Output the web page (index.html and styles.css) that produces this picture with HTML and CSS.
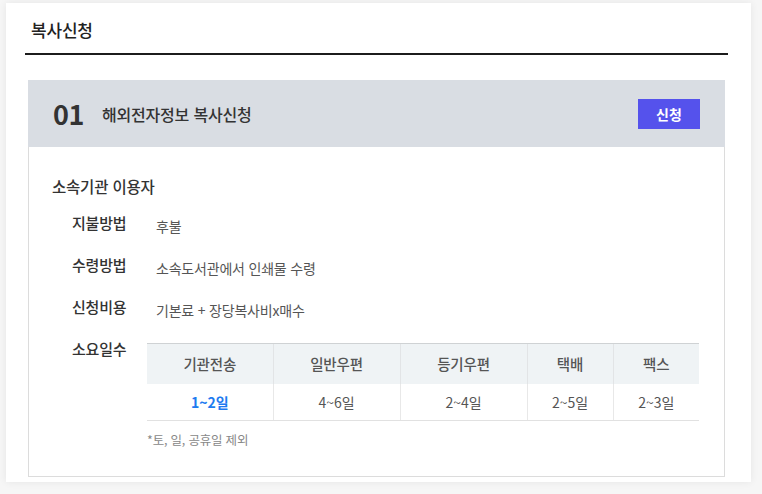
FILE: index.html
```html
<!DOCTYPE html>
<html lang="ko">
<head>
<meta charset="utf-8">
<title>복사신청</title>
<link rel="stylesheet" href="styles.css">
</head>
<body>
<div class="card">
  <h2 class="page-title">복사신청</h2>
  <section class="panel">
    <header class="panel-head">
      <span class="num">01</span>
      <span class="panel-title">해외전자정보 복사신청</span>
      <button class="btn">신청</button>
    </header>
    <div class="panel-body">
      <h3 class="group-title">소속기관 이용자</h3>
      <div class="rows">
        <div class="row"><span class="label">지불방법</span><span class="value">후불</span></div>
        <div class="row"><span class="label">수령방법</span><span class="value">소속도서관에서 인쇄물 수령</span></div>
        <div class="row"><span class="label">신청비용</span><span class="value">기본료 + 장당복사비x매수</span></div>
        <div class="row">
          <span class="label">소요일수</span>
          <div class="table-wrap">
            <table class="days">
              <colgroup>
                <col class="c1"><col class="c2"><col class="c3"><col class="c4"><col class="c5">
              </colgroup>
              <thead>
                <tr><th>기관전송</th><th>일반우편</th><th>등기우편</th><th>택배</th><th>팩스</th></tr>
              </thead>
              <tbody>
                <tr><td class="hl">1~2일</td><td>4~6일</td><td>2~4일</td><td>2~5일</td><td>2~3일</td></tr>
              </tbody>
            </table>
            <p class="note">*토, 일, 공휴일 제외</p>
          </div>
        </div>
      </div>
    </div>
  </section>
</div>
</body>
</html>
```
FILE: styles.css
```css
* { box-sizing: border-box; }
html, body { margin: 0; padding: 0; }
body {
  background: #f6f6f6;
  font-family: "Noto Sans CJK KR", "Noto Sans", sans-serif;
  color: #333;
  width: 762px;
  height: 494px;
  overflow: hidden;
}
.card {
  background: #fff;
  margin: 3px 11px 0 6px;
  padding: 15px 23px 5px 19px;
  box-shadow: 0 0 8px rgba(0,0,0,0.07);
}
.page-title {
  margin: 0;
  font-size: 17px;
  font-weight: 500;
  line-height: 24px;
  color: #222;
  padding: 0 0 11px 6px;
  border-bottom: 2px solid #1c1c1c;
  letter-spacing: -0.2px;
}
.panel {
  margin: 25px 3px 0 3px;
  border: 1px solid #dcdcdc;
  border-top: none;
}
.panel-head {
  display: flex;
  align-items: center;
  height: 67px;
  background: #d9dde3;
  margin: 0 -1px;
  padding: 0 25px 0 25px;
}
.num {
  font-size: 27px;
  font-weight: 700;
  color: #333;
  line-height: 1;
  width: 49px;
  letter-spacing: -0.5px;
}
.panel-title {
  font-size: 16px;
  font-weight: 500;
  color: #333;
  flex: 1;
  letter-spacing: -0.2px;
}
.btn {
  width: 62px;
  height: 30px;
  border: none;
  background: #5552ec;
  color: #fff;
  font-family: inherit;
  font-size: 14px;
  font-weight: 700;
  padding: 0;
  margin-top: 1px;
}
.panel-body {
  padding: 28px 25px 27px 23px;
}
.group-title {
  margin: 0;
  font-size: 15.5px;
  font-weight: 500;
  line-height: 22px;
  color: #333;
  letter-spacing: -0.2px;
}
.rows {
  display: flex;
  flex-direction: column;
  gap: 20px;
  margin-top: 15px;
  padding-left: 20px;
}
.row {
  display: flex;
  align-items: flex-start;
  line-height: 22px;
}
.label {
  width: 75px;
  flex: none;
  font-size: 15px;
  font-weight: 500;
  color: #333;
  height: 22px;
  letter-spacing: -0.2px;
}
.value {
  padding-left: 9px;
  font-size: 14px;
  color: #555;
  line-height: 16px;
  margin-top: 6px;
  letter-spacing: -0.2px;
}
.table-wrap {
  flex: 1;
  margin-top: 5px;
}
.days {
  width: 100%;
  border-collapse: collapse;
  table-layout: fixed;
}
.c1 { width: 126px; }
.c2 { width: 127px; }
.c3 { width: 127px; }
.c4 { width: 86px; }
.c5 { width: 86px; }
.days th {
  height: 40px;
  padding: 0;
  background: #eff3f5;
  border-top: 1px solid #cfd2d4;
  border-left: 1px solid #e2e4e6;
  font-size: 14.5px;
  font-weight: 500;
  color: #555;
  line-height: 20px;
  letter-spacing: -0.2px;
}
.days td {
  height: 37px;
  padding: 0;
  border-left: 1px solid #e8e8e8;
  border-bottom: 1px solid #e1e1e1;
  text-align: center;
  font-size: 14px;
  color: #555;
  line-height: 20px;
}
.days th:first-child, .days td:first-child { border-left: none; }
.days td.hl { color: #1e7bf0; font-weight: 700; }
.note {
  margin: 10px 0 0 0;
  font-size: 12.5px;
  line-height: 18px;
  color: #888;
  letter-spacing: -0.2px;
}
```
